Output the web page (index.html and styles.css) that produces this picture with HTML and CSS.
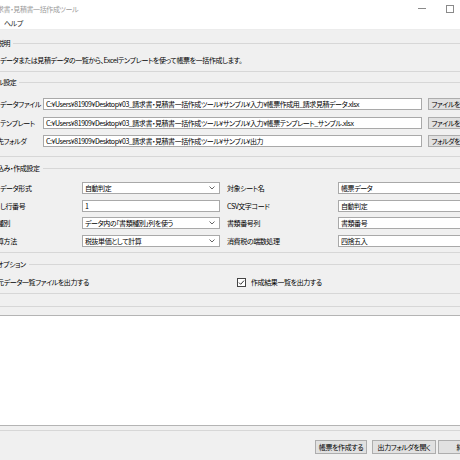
FILE: index.html
```html
<!DOCTYPE html>
<html lang="ja">
<head>
    <meta charset="UTF-8">
    <meta name="viewport" content="width=device-width, initial-scale=1.0">
    <title>請求書・見積書一括作成ツール</title>
    <link rel="stylesheet" href="styles.css">
</head>
<body>

    <!-- Window caption (cropped on the left) -->
    <div class="titlebar">
        <span class="title cut">求書・見積書一括作成ツール</span>
        <div class="caption-buttons">
            <span class="cap-btn"><span class="cap-min"></span></span>
            <span class="cap-btn"><span class="cap-max"></span></span>
            <span class="cap-btn"></span>
        </div>
    </div>

    <div class="menubar">
        <span class="menu-item">ヘルプ</span>
    </div>

    <div class="main">
        <fieldset class="group g-desc">
            <legend class="cut">説明</legend>
            <p class="desc">データまたは見積データの一覧から、Excelテンプレートを使って帳票を一括作成します。</p>
        </fieldset>

        <fieldset class="group g-files">
            <legend class="cut">ル設定</legend>
            <div class="file-row">
                <span class="label">データファイル</span>
                <div class="box">C:¥Users¥81909¥Desktop¥03_請求書・見積書一括作成ツール¥サンプル¥入力¥帳票作成用_請求見積データ.xlsx</div>
                <button class="btn btn-pick">ファイルを選択</button>
            </div>
            <div class="file-row">
                <span class="label">テンプレート</span>
                <div class="box">C:¥Users¥81909¥Desktop¥03_請求書・見積書一括作成ツール¥サンプル¥入力¥帳票テンプレート_サンプル.xlsx</div>
                <button class="btn btn-pick">ファイルを選択</button>
            </div>
            <div class="file-row">
                <span class="label cut">先フォルダ</span>
                <div class="box">C:¥Users¥81909¥Desktop¥03_請求書・見積書一括作成ツール¥サンプル¥出力</div>
                <button class="btn btn-pick">フォルダを選択</button>
            </div>
        </fieldset>

        <fieldset class="group g-settings">
            <legend class="cut">込み・作成設定</legend>
            <div class="set-row">
                <span class="label label-left">データ形式</span>
                <div class="box combo">自動判定<svg class="chev" width="6" height="4" viewBox="0 0 6 4"><polyline points="0.5,0.5 3,3 5.5,0.5" fill="none" stroke="#555" stroke-width="0.9"/></svg></div>
                <span class="label label-right">対象シート名</span>
                <div class="box box-right">帳票データ</div>
            </div>
            <div class="set-row">
                <span class="label label-left">し行番号</span>
                <div class="box combo">1</div>
                <span class="label label-right">CSV文字コード</span>
                <div class="box box-right">自動判定</div>
            </div>
            <div class="set-row">
                <span class="label label-left cut">種別</span>
                <div class="box combo">データ内の「書類種別」列を使う<svg class="chev" width="6" height="4" viewBox="0 0 6 4"><polyline points="0.5,0.5 3,3 5.5,0.5" fill="none" stroke="#555" stroke-width="0.9"/></svg></div>
                <span class="label label-right">書類番号列</span>
                <div class="box box-right">書類番号</div>
            </div>
            <div class="set-row">
                <span class="label label-left cut">算方法</span>
                <div class="box combo">税抜単価として計算<svg class="chev" width="6" height="4" viewBox="0 0 6 4"><polyline points="0.5,0.5 3,3 5.5,0.5" fill="none" stroke="#555" stroke-width="0.9"/></svg></div>
                <span class="label label-right">消費税の端数処理</span>
                <div class="box box-right">四捨五入</div>
            </div>
        </fieldset>

        <fieldset class="group g-options">
            <legend class="cut">オプション</legend>
            <div class="opt-row">
                <span class="opt-left cut">元データ一覧ファイルを出力する</span>
                <span class="opt-right">
                    <svg class="check" width="9" height="9" viewBox="0 0 9 9">
                        <rect x="0.5" y="0.5" width="8" height="8" fill="#fff" stroke="#444"/>
                        <polyline points="2,4.6 3.7,6.3 7,2.6" fill="none" stroke="#333" stroke-width="1"/>
                    </svg>
                    作成結果一覧を出力する
                </span>
            </div>
        </fieldset>

        <fieldset class="group g-log">
            <div class="log"></div>
        </fieldset>

        <div class="footer">
            <button class="btn btn-create">帳票を作成する</button>
            <button class="btn btn-open">出力フォルダを開く</button>
            <button class="btn btn-exit">終了</button>
        </div>
    </div>

</body>
</html>
```

FILE: styles.css
```css
body {
    margin: 0;
    width: 460px;
    height: 460px;
    overflow: hidden;
    background-color: #f0f0f0;
    font-family: "Noto Sans CJK JP", "Noto Sans", sans-serif;
    font-size: 7px;
    letter-spacing: -0.4px;
    font-feature-settings: "palt";
    color: #000;
}

/* text that runs off the left edge of the shot */
.cut {
    margin-left: -3px;
}

.titlebar {
    height: 17px;
    display: flex;
    align-items: center;
    background-color: #ffffff;
}

.title {
    color: #9a9a9a;
    white-space: nowrap;
}

.caption-buttons {
    display: flex;
    margin-left: auto;
    margin-right: -27px;
}

.cap-btn {
    width: 26px;
    height: 17px;
    display: flex;
    align-items: center;
    justify-content: center;
}

.cap-min {
    width: 8px;
    height: 1px;
    background-color: #8a8a8a;
}

.cap-max {
    width: 6px;
    height: 6px;
    border: 1px solid #8a8a8a;
    margin-left: 3px;
}

.menubar {
    height: 13px;
    line-height: 13px;
    padding-left: 4px;
    background-color: #ffffff;
    border-bottom: 1px solid #ececec;
    box-sizing: border-box;
}

.menu-item {
    color: #222;
}

.group {
    margin: 0 -10px;
    padding: 0 0 0 9px;
    min-width: 0;
    border: 1px solid #d7d7d7;
}

.group legend {
    padding: 0 3px 0 0;
    line-height: 12px;
    height: 12px;
}

.g-desc {
    margin-top: 7px;
    padding-top: 5px;
    padding-bottom: 5px;
}

.desc {
    margin: 0;
    line-height: 12px;
    white-space: nowrap;
}

.g-files {
    margin-top: 4px;
    padding-top: 10px;
    padding-bottom: 9px;
    display: flex;
    flex-direction: column;
    gap: 6.5px;
}

.file-row {
    display: flex;
    align-items: center;
    height: 12px;
}

.file-row .label {
    width: 43px;
    flex: none;
}

.file-row .label.cut {
    width: 46px;
}

.label {
    white-space: nowrap;
}

.box {
    height: 12px;
    box-sizing: border-box;
    background-color: #ffffff;
    border: 1px solid #a9a9a9;
    padding: 0 2px;
    line-height: 10px;
    letter-spacing: -0.45px;
    white-space: nowrap;
    overflow: hidden;
    flex: none;
    display: flex;
    align-items: center;
}

.file-row .box {
    width: 379px;
}

.btn {
    font-family: inherit;
    font-size: 7px;
    letter-spacing: -0.4px;
    font-feature-settings: "palt";
    color: #000;
    background-color: #e1e1e1;
    border: 1px solid #adadad;
    padding: 0;
    margin: 0;
    white-space: nowrap;
    flex: none;
    box-sizing: border-box;
}

.btn-pick {
    width: 50px;
    height: 12px;
    line-height: 10px;
    margin-left: 5.5px;
}

.g-settings {
    margin-top: 5px;
    padding-top: 8px;
    padding-bottom: 5.5px;
    display: flex;
    flex-direction: column;
    gap: 5.5px;
}

.set-row {
    display: flex;
    align-items: center;
    height: 12px;
}

.label-left {
    width: 82px;
    flex: none;
}

.label-left.cut {
    width: 85px;
}

.combo {
    width: 138px;
}

.chev {
    margin-left: auto;
    margin-right: 2px;
}

.label-right {
    width: 111px;
    margin-left: 7px;
    flex: none;
}

.box-right {
    width: 130px;
}

.g-options {
    margin-top: 5px;
    padding-top: 6px;
    padding-bottom: 5px;
}

.opt-row {
    display: flex;
    align-items: center;
    height: 12px;
}

.opt-left {
    width: 240px;
    flex: none;
    white-space: nowrap;
}

.opt-right {
    display: flex;
    align-items: center;
    gap: 5px;
    white-space: nowrap;
}

.g-log {
    margin-top: 12px;
    padding-top: 8px;
    padding-bottom: 4px;
}

.log {
    height: 111px;
    box-sizing: border-box;
    background-color: #ffffff;
    border: 1px solid #b4b4b4;
    margin-left: -4px;
    margin-right: 4px;
}

.footer {
    display: flex;
    justify-content: flex-end;
    margin-top: 9px;
    margin-right: -28px;
}

.footer .btn {
    height: 14px;
    line-height: 12px;
}

.btn-create {
    width: 52px;
}

.btn-open {
    width: 64px;
    margin-left: 5px;
}

.btn-exit {
    width: 50px;
    margin-left: 2px;
}
```
